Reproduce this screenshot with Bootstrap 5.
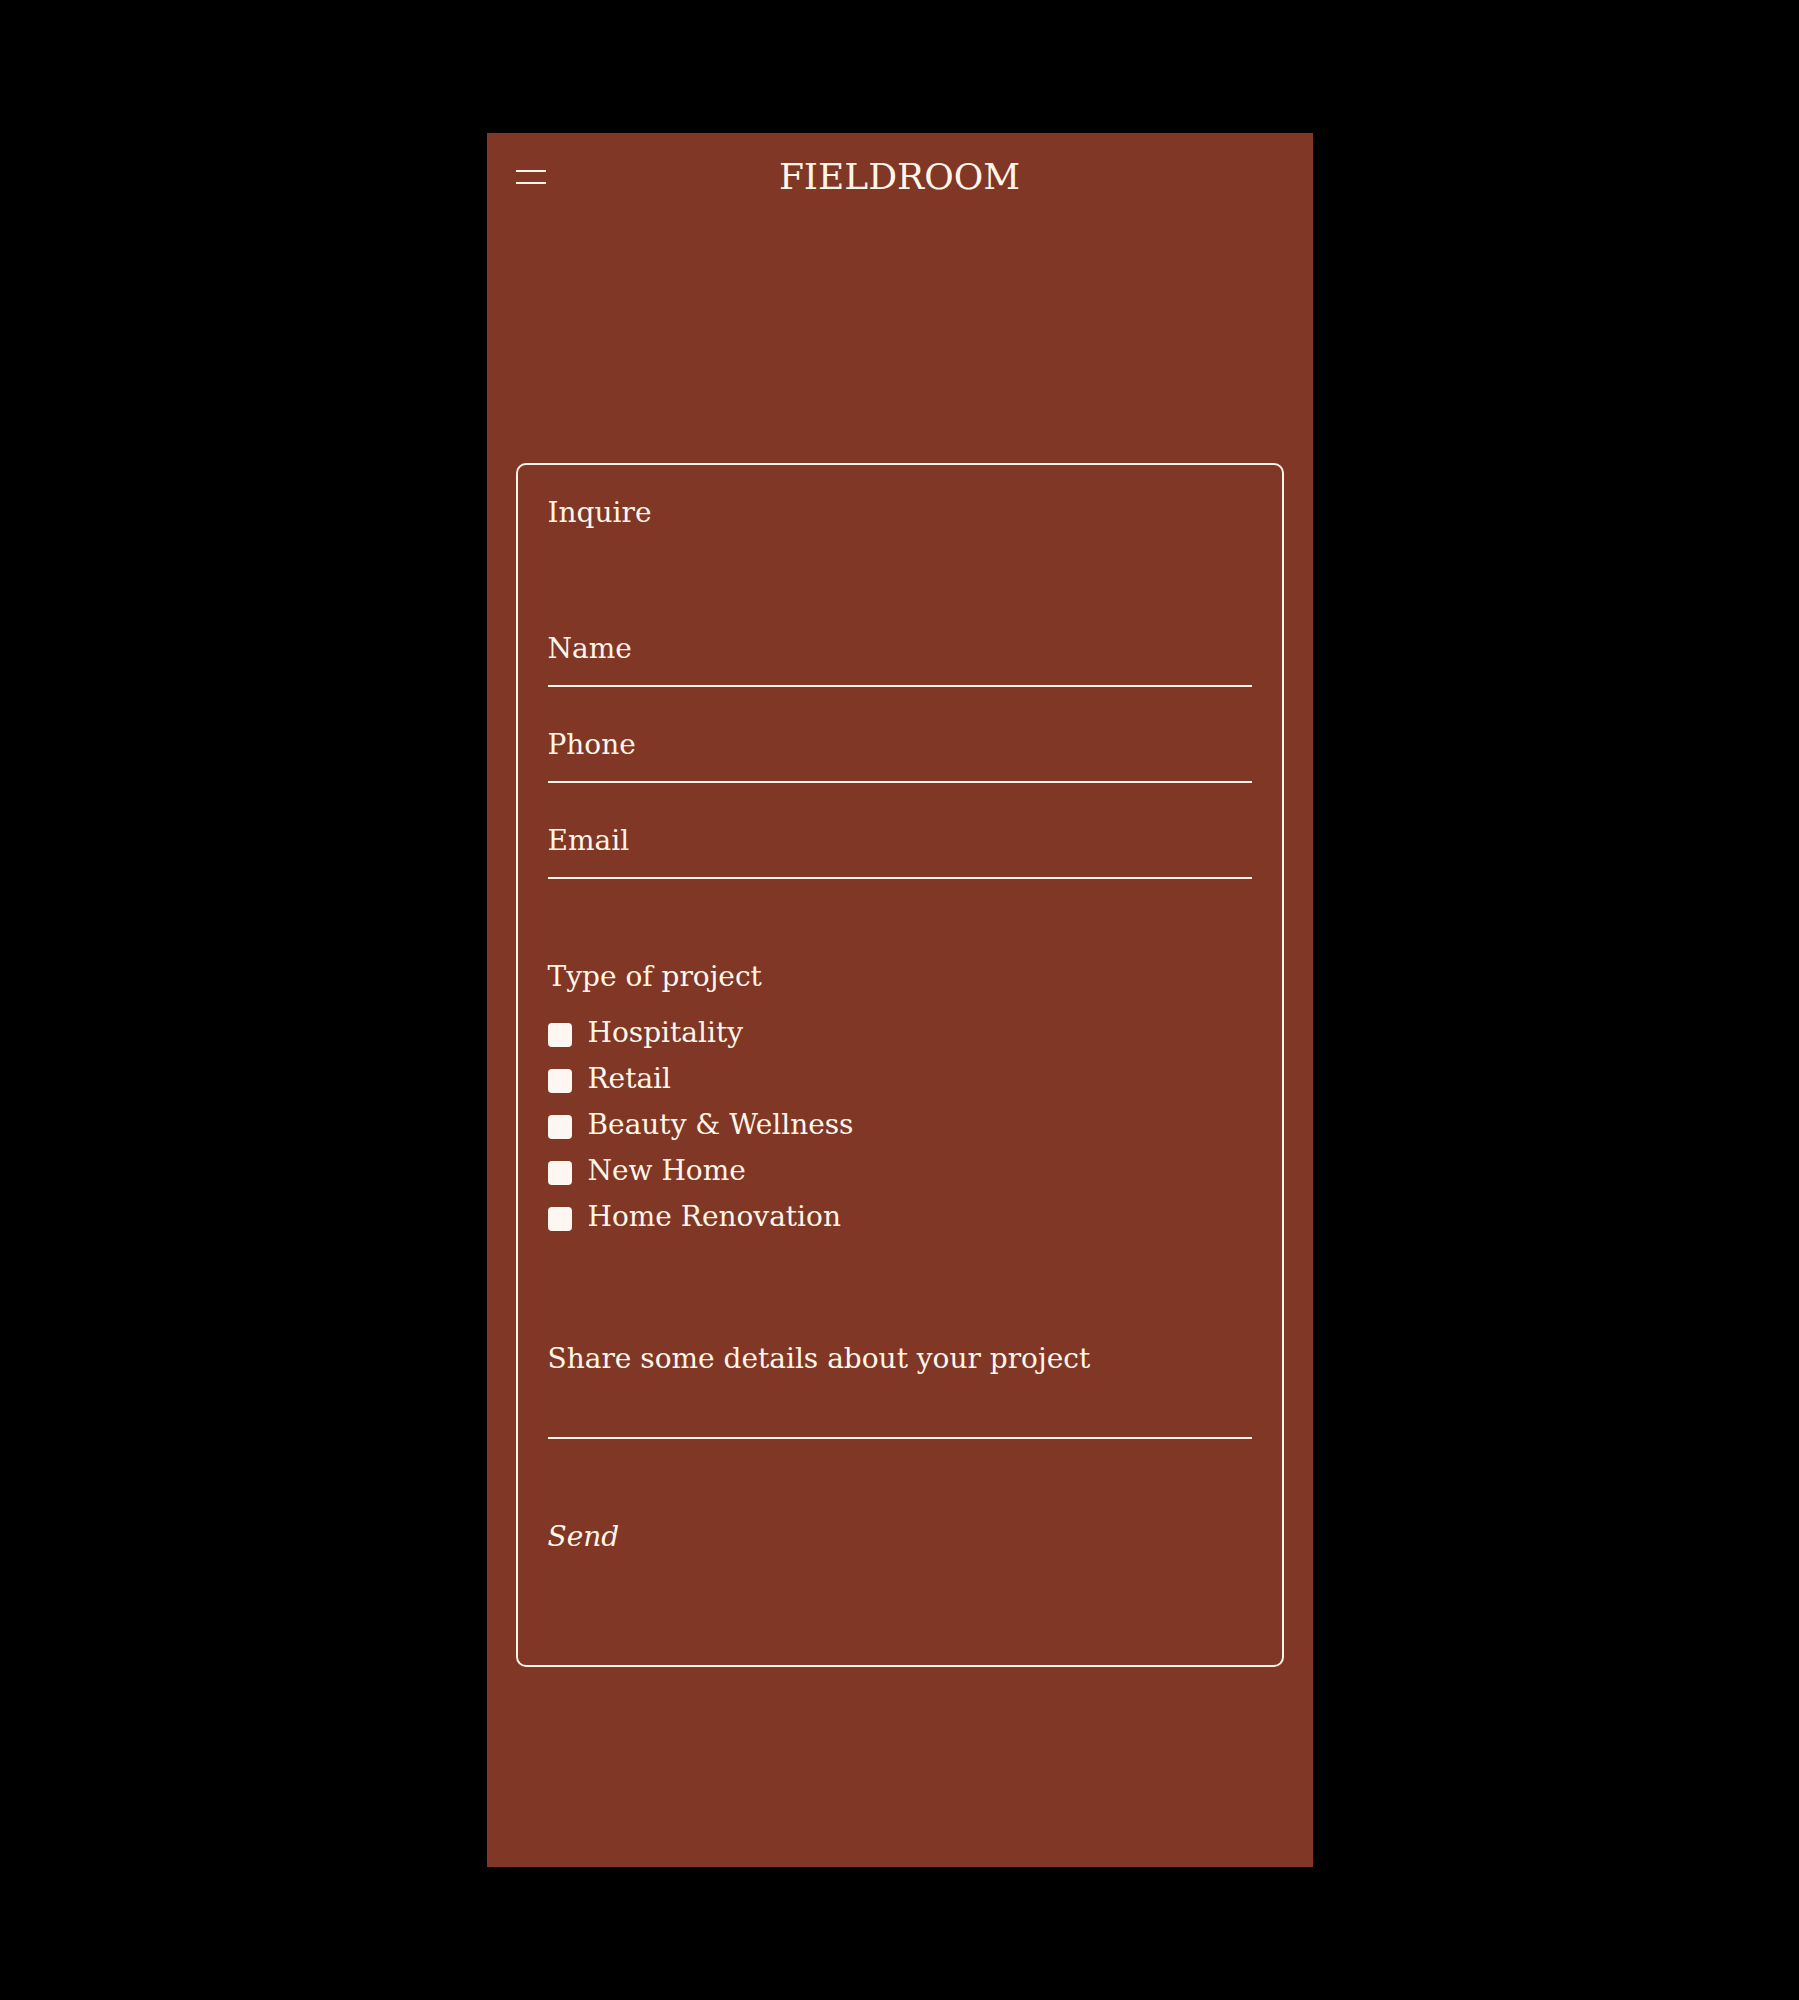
<!DOCTYPE html>
<html lang="en">
<head>
<meta charset="utf-8">
<meta name="viewport" content="width=device-width, initial-scale=1">
<title>Fieldroom – Inquire</title>
<link rel="stylesheet" href="https://cdn.jsdelivr.net/npm/bootstrap@5.3.0/dist/css/bootstrap.min.css">
<style>
  :root { --clay: #803725; --cream: #fff5e9; --chalk: #fef7f1; }
  body {
    background: #000;
    color: var(--cream);
    font: 28px/36px "DejaVu Serif", serif;
    padding: 133px 0;
  }
  .site-panel { max-width: 826px; background: var(--clay); padding: 22px 29px 200px; }
  .site-header { display: grid; grid-template-columns: 1fr auto 1fr; align-items: center; margin-bottom: 264px; }
  .menu-toggle { width: 30px; height: 14px; border-top: 2px solid var(--cream); border-bottom: 2px solid var(--cream); }
  .wordmark { color: var(--cream); font-size: 36px; line-height: 44px; }
  .inquiry { border: 2px solid var(--cream); border-radius: 10px; padding: 30px 30px 110px; }
  .inquiry h1, .inquiry legend { font-size: 28px; line-height: 36px; font-weight: 400; }
  .inquiry h1 { margin-bottom: 100px; }
  .field-list { gap: 40px; margin-bottom: 80px; }
  .line-field { border-bottom: 2px solid var(--cream); padding-bottom: 18px; gap: 16px; }
  .bare-control { background: transparent; border: 0; padding: 0; color: inherit; outline: 0; min-width: 0; }
  .project-types { margin-bottom: 106px; }
  .project-types legend { margin-bottom: 20px; }
  .option-list { gap: 10px; }
  .option { gap: 16px; }
  .option .form-check-input {
    width: 24px; height: 24px; margin: 4px 0 0; border: 0; border-radius: 4px;
    background-color: var(--chalk);
  }
  .option .form-check-input:checked { background-color: #2b120c; }
  .details-field { border-bottom: 2px solid var(--cream); margin-bottom: 80px; }
  .details-field textarea { height: 60px; resize: none; }
  .send-button { font-style: italic; }
</style>
</head>
<body>
<div class="site-panel mx-auto">
  <header class="site-header">
    <button type="button" class="menu-toggle bg-transparent border-start-0 border-end-0 p-0" aria-label="Menu"></button>
    <a href="#" class="wordmark text-decoration-none">FIELDROOM</a>
  </header>
  <main>
    <form class="inquiry">
      <h1>Inquire</h1>
      <div class="field-list d-flex flex-column">
        <div class="line-field d-flex">
          <label for="name">Name</label>
          <input id="name" type="text" class="bare-control flex-grow-1" autocomplete="name">
        </div>
        <div class="line-field d-flex">
          <label for="phone">Phone</label>
          <input id="phone" type="tel" class="bare-control flex-grow-1" autocomplete="tel">
        </div>
        <div class="line-field d-flex">
          <label for="email">Email</label>
          <input id="email" type="email" class="bare-control flex-grow-1" autocomplete="email">
        </div>
      </div>
      <fieldset class="project-types">
        <legend>Type of project</legend>
        <div class="option-list d-flex flex-column">
          <div class="option d-flex align-items-center">
            <input class="form-check-input" type="checkbox" id="hospitality">
            <label for="hospitality">Hospitality</label>
          </div>
          <div class="option d-flex align-items-center">
            <input class="form-check-input" type="checkbox" id="retail">
            <label for="retail">Retail</label>
          </div>
          <div class="option d-flex align-items-center">
            <input class="form-check-input" type="checkbox" id="beauty">
            <label for="beauty">Beauty &amp; Wellness</label>
          </div>
          <div class="option d-flex align-items-center">
            <input class="form-check-input" type="checkbox" id="new-home">
            <label for="new-home">New Home</label>
          </div>
          <div class="option d-flex align-items-center">
            <input class="form-check-input" type="checkbox" id="renovation">
            <label for="renovation">Home Renovation</label>
          </div>
        </div>
      </fieldset>
      <div class="details-field d-flex flex-column">
        <label for="details">Share some details about your project</label>
        <textarea id="details" class="bare-control w-100"></textarea>
      </div>
      <button type="submit" class="send-button bare-control d-block">Send</button>
    </form>
  </main>
</div>
<script src="https://cdn.jsdelivr.net/npm/bootstrap@5.3.0/dist/js/bootstrap.bundle.min.js"></script>
</body>
</html>
